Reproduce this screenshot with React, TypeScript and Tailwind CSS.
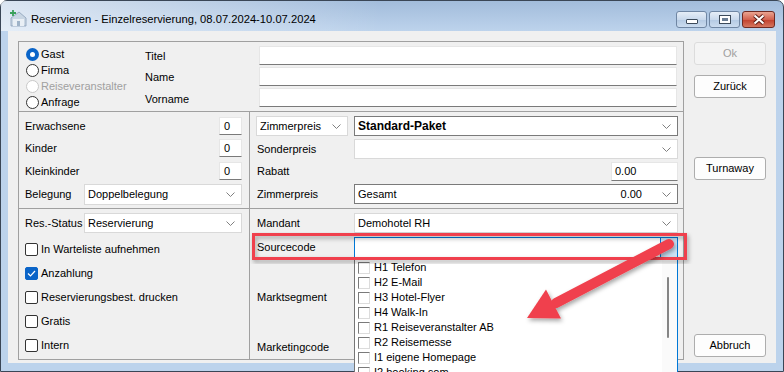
import clsx from "clsx";

const sources = [
  "H1 Telefon",
  "H2 E-Mail",
  "H3 Hotel-Flyer",
  "H4 Walk-In",
  "R1 Reiseveranstalter AB",
  "R2 Reisemesse",
  "I1 eigene Homepage",
  "I2 booking.com",
];

function Chevron() {
  return (
    <svg width="9" height="5" viewBox="0 0 9 5" className="shrink-0">
      <path d="M0.5 0.5 L4.5 4.5 L8.5 0.5" fill="none" stroke="#808080" strokeWidth="1" />
    </svg>
  );
}

function Select({
  value,
  right,
  bold,
  dark,
  className,
}: {
  value?: string;
  right?: string;
  bold?: boolean;
  dark?: boolean;
  className?: string;
}) {
  return (
    <div
      className={clsx(
        "flex items-center border bg-white pl-[3px] pr-[6px]",
        dark ? "border-[#7a7a7a]" : "border-[#d9d9d9]",
        className,
      )}
    >
      <span className={clsx("flex-1 truncate", bold && "text-[12px] font-bold")}>{value}</span>
      {right ? <span className="mr-[20px]">{right}</span> : null}
      <Chevron />
    </div>
  );
}

function Field({ className, children }: { className?: string; children?: React.ReactNode }) {
  return (
    <div
      className={clsx(
        "flex items-center border border-[#e6e6e6] border-b-[#7a7a7a] bg-white pl-[3px]",
        className,
      )}
    >
      {children}
    </div>
  );
}

function Radio({ label, checked, disabled }: { label: string; checked?: boolean; disabled?: boolean }) {
  return (
    <div className="flex h-[16px] items-center gap-[2px]">
      <svg width="13" height="13" viewBox="0 0 13 13">
        {checked ? (
          <>
            <circle cx="6.5" cy="6.5" r="6.5" fill="#0a64c8" />
            <circle cx="6.5" cy="6.5" r="2.5" fill="#fff" />
          </>
        ) : (
          <circle cx="6.5" cy="6.5" r="6" fill="#fff" stroke={disabled ? "#c8c8c8" : "#333"} />
        )}
      </svg>
      <span className={disabled ? "text-[#a0a0a0]" : ""}>{label}</span>
    </div>
  );
}

function Check({ label, checked }: { label: string; checked?: boolean }) {
  return (
    <div className="flex h-[24px] items-center gap-[3px]">
      <span
        className={clsx(
          "flex h-[13px] w-[13px] items-center justify-center rounded-[2px] border",
          checked ? "border-[#0a64c8] bg-[#0a64c8]" : "border-[#333] bg-white",
        )}
      >
        {checked ? (
          <svg width="9" height="7" viewBox="0 0 9 7">
            <path d="M1 3.5 L3.5 6 L8 1" fill="none" stroke="#fff" strokeWidth="1.2" />
          </svg>
        ) : null}
      </span>
      <span>{label}</span>
    </div>
  );
}

function Btn({ label, disabled, className }: { label: string; disabled?: boolean; className?: string }) {
  return (
    <div
      className={clsx(
        "flex h-[23px] items-center justify-center rounded-[3px] border",
        disabled ? "border-[#dcdcdc] bg-[#f4f4f4] text-[#a0a0a0]" : "border-[#adadad] bg-[#fdfdfd]",
        className,
      )}
    >
      {label}
    </div>
  );
}

function TitleIcon() {
  return (
    <svg width="18" height="18" viewBox="0 0 18 18">
      <path d="M2 9 L10 3 L17 9 L17 17 L2 17 Z" fill="#c9d6e3" stroke="#8aa0b8" strokeWidth="0.8" />
      <rect x="4" y="10" width="11" height="7" fill="#e9eff5" />
      <rect x="8" y="12" width="3" height="5" fill="#9fb3c8" />
      <path d="M4 1 V7 M1 4 H7" stroke="#3aa05a" strokeWidth="1.8" />
    </svg>
  );
}

export default function App() {
  return (
    <div className="relative h-[372px] w-[784px] overflow-hidden bg-white font-['Liberation_Sans',Arial,sans-serif] text-[11px] text-black">
      <div className="flex h-full w-full flex-col rounded-t-[7px] border border-[#3a4656] bg-[linear-gradient(to_bottom,#a2bcdb_0px,#bdd3ec_30px,#bcd3ec_100%)]">
        {/* Titelleiste */}
        <div className="flex h-[30px] items-start bg-[linear-gradient(to_right,rgba(255,255,255,0.6),rgba(255,255,255,0)_380px)] pl-[8px] pr-[8px]">
          <div className="mt-[8px]">
            <TitleIcon />
          </div>
          <span className="ml-[4px] mt-[10px] text-[11.2px] text-black">
            Reservieren - Einzelreservierung, 08.07.2024-10.07.2024
          </span>
          <div className="ml-auto mt-[10px] flex gap-[2px]">
            <div className="flex h-[17px] w-[31px] items-end justify-center rounded-[3px] border border-[#6f86a3] bg-[linear-gradient(to_bottom,#e6eef7,#c9d9ec_50%,#b3c9e3_51%,#cbdcef)] pb-[3px]">
              <span className="h-[5px] w-[12px] rounded-[1px] border border-[#3c4a5a] bg-white" />
            </div>
            <div className="flex h-[17px] w-[31px] items-center justify-center rounded-[3px] border border-[#6f86a3] bg-[linear-gradient(to_bottom,#e6eef7,#c9d9ec_50%,#b3c9e3_51%,#cbdcef)]">
              <span className="flex h-[9px] w-[12px] items-center justify-center border border-[#3c4a5a] bg-white">
                <span className="h-[3px] w-[6px] bg-[#6a7d94]" />
              </span>
            </div>
            <div className="flex h-[17px] w-[33px] items-center justify-center rounded-[3px] border border-[#6f2a22] bg-[linear-gradient(to_bottom,#eaa592,#d3624f_50%,#c13f2c_51%,#d5765f)]">
              <svg width="14" height="11" viewBox="0 0 14 11">
                <path d="M2.5 1.5 L11.5 9.5 M11.5 1.5 L2.5 9.5" stroke="#5a1e16" strokeWidth="4" />
                <path d="M2.5 1.5 L11.5 9.5 M11.5 1.5 L2.5 9.5" stroke="#fff" strokeWidth="2" />
              </svg>
            </div>
          </div>
        </div>

        {/* Client-Bereich */}
        <div className="mx-[7px] mb-[8px] flex flex-1 bg-[#f0f0f0] pb-[3px] pl-[10px] pt-[10px]">
          <div className="flex w-[666px] flex-col border border-[#a0a0a0]">
            {/* Gast / Name */}
            <div className="flex h-[70px] border-b border-[#a0a0a0]">
              <div className="w-[126px] pl-[7px] pt-[4px]">
                <Radio label="Gast" checked />
                <Radio label="Firma" />
                <Radio label="Reiseveranstalter" disabled />
                <Radio label="Anfrage" />
              </div>
              <div className="flex w-[114px] flex-col pt-[5px]">
                <div className="flex h-[19px] items-center">Titel</div>
                <div className="mt-[2px] flex h-[19px] items-center">Name</div>
                <div className="mt-[3px] flex h-[19px] items-center">Vorname</div>
              </div>
              <div className="flex flex-1 flex-col gap-[2px] pr-[6px] pt-[4px]">
                <Field className="h-[19px]" />
                <Field className="h-[19px]" />
                <Field className="h-[19px]" />
              </div>
            </div>

            <div className="grid flex-1 grid-cols-[231px_1fr] grid-rows-[97px_1fr]">
              {/* Personen */}
              <div className="border-b border-r border-[#a0a0a0] pl-[6px] pr-[7px] pt-[5px]">
                <div className="flex h-[18px] items-center justify-between">
                  <span>Erwachsene</span>
                  <Field className="h-[18px] w-[23px] pl-[4px]">0</Field>
                </div>
                <div className="mt-[4px] flex h-[18px] items-center justify-between">
                  <span>Kinder</span>
                  <Field className="h-[18px] w-[23px] pl-[4px]">0</Field>
                </div>
                <div className="mt-[5px] flex h-[18px] items-center justify-between">
                  <span>Kleinkinder</span>
                  <Field className="h-[18px] w-[23px] pl-[4px]">0</Field>
                </div>
                <div className="mt-[4px] flex h-[21px] items-center justify-between">
                  <span>Belegung</span>
                  <Select value="Doppelbelegung" className="h-[21px] w-[158px]" />
                </div>
              </div>

              {/* Preise */}
              <div className="grid grid-cols-[98px_1fr] content-start gap-y-[3px] border-b border-[#a0a0a0] pl-[6px] pr-[5px] pt-[4px]">
                <Select value="Zimmerpreis" className="h-[20px] w-[92px]" />
                <Select value="Standard-Paket" bold dark className="h-[20px]" />
                <div className="flex h-[20px] items-center pl-[1px]">Sonderpreis</div>
                <Select className="h-[20px]" />
                <div className="flex h-[19px] items-center pl-[1px]">Rabatt</div>
                <div className="flex justify-end">
                  <Field className="h-[19px] w-[67px]">0.00</Field>
                </div>
                <div className="flex h-[20px] items-center pl-[1px]">Zimmerpreis</div>
                <Select value="Gesamt" right="0.00" dark className="h-[20px]" />
              </div>

              {/* Status */}
              <div className="border-r border-[#a0a0a0] pl-[6px] pr-[7px] pt-[4px]">
                <div className="flex h-[20px] items-center justify-between">
                  <span>Res.-Status</span>
                  <Select value="Reservierung" className="h-[20px] w-[158px]" />
                </div>
                <div className="mt-[4px]">
                  <Check label="In Warteliste aufnehmen" />
                  <Check label="Anzahlung" checked />
                  <Check label="Reservierungsbest. drucken" />
                  <Check label="Gratis" />
                  <Check label="Intern" />
                </div>
              </div>

              {/* Mandant / Quelle */}
              <div className="grid grid-cols-[98px_1fr] content-start gap-y-[4px] pl-[6px] pr-[5px] pt-[4px]">
                <div className="flex h-[20px] items-center pl-[1px]">Mandant</div>
                <Select value="Demohotel RH" className="h-[20px]" />
                <div className="flex h-[21px] items-center pl-[1px]">Sourcecode</div>
                <div className="relative z-10 flex h-[21px]">
                  <div className="flex-1 border border-[#0078d7] bg-white" />
                  <div className="flex w-[17px] items-center justify-center border border-l-0 border-[#0078d7] bg-[#cce4f7]" />
                  <div className="absolute left-0 top-full flex h-[130px] w-full border-l border-r border-l-[#767676] border-r-[#0078d7] bg-white">
                    <div className="flex-1 pl-[3px] pt-[2px]">
                      {sources.map((s) => (
                        <div key={s} className="flex h-[15px] items-center gap-[4px]">
                          <span className="h-[12px] w-[12px] border border-b-[#dcdcdc] border-l-[#7a7a7a] border-r-[#dcdcdc] border-t-[#7a7a7a] bg-white" />
                          <span>{s}</span>
                        </div>
                      ))}
                    </div>
                    <div className="w-[15px] bg-[#fafafa] pl-[5px] pt-[19px]">
                      <div className="h-[61px] w-[2px] rounded-full bg-[#858585]" />
                    </div>
                  </div>
                </div>
                <div className="flex h-[71px] items-center pl-[1px]">Marktsegment</div>
                <div className="flex h-[71px] flex-col justify-end">
                  <div className="h-[26px] border border-[#b02828] bg-white" />
                </div>
                <div className="flex h-[21px] items-center pl-[1px]">Marketingcode</div>
                <div className="h-[22px] border border-[#b02828] bg-white" />
              </div>
            </div>
          </div>

          {/* Schaltflächen */}
          <div className="ml-[10px] flex w-[72px] flex-col pt-[1px]">
            <Btn label="Ok" disabled />
            <Btn label="Zurück" className="mt-[10px]" />
            <Btn label="Turnaway" className="mt-[59px]" />
            <Btn label="Abbruch" className="mb-[3px] mt-auto" />
          </div>
        </div>
      </div>

      {/* Markierung */}
      <svg className="pointer-events-none absolute left-0 top-0 z-20" width="784" height="372" viewBox="0 0 784 372">
        <defs>
          <filter id="sh" x="-10%" y="-10%" width="120%" height="130%">
            <feDropShadow dx="1.5" dy="2.5" stdDeviation="2" floodColor="#000" floodOpacity="0.35" />
          </filter>
        </defs>
        <rect x="253.5" y="234.5" width="432" height="24" fill="none" stroke="#f0414d" strokeWidth="3" filter="url(#sh)" />
        <g filter="url(#sh)">
          <line x1="669" y1="244" x2="556" y2="303" stroke="#f0414d" strokeWidth="10" strokeLinecap="round" />
          <polygon points="527,318 546,289.5 561,318.5" fill="#f0414d" />
        </g>
      </svg>
    </div>
  );
}
